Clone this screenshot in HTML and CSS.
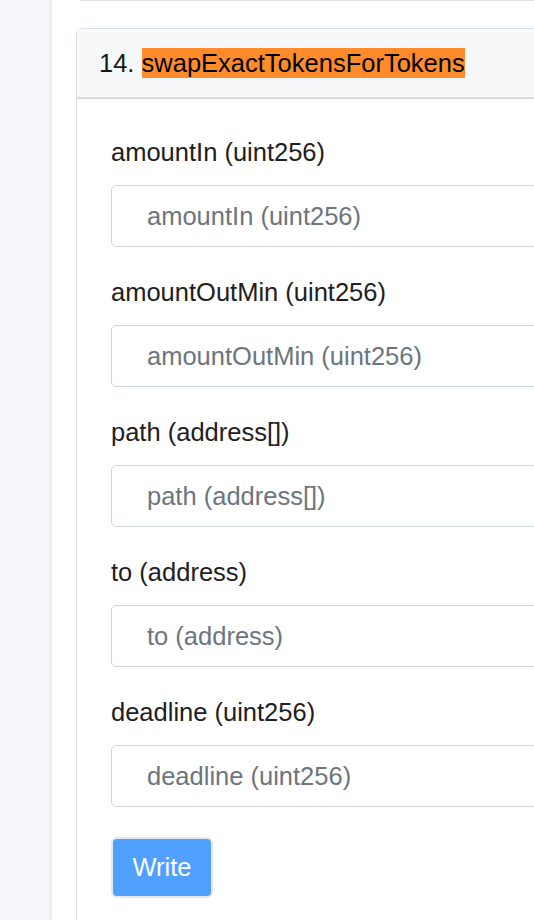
FILE: index.html
```html
<!DOCTYPE html>
<html>
<head>
<meta charset="utf-8">
<link rel="stylesheet" href="styles.css">
</head>
<body>
<div class="layout">
  <aside class="sidebar"></aside>
  <main class="main">
    <div class="prev-card"></div>
    <section class="card">
      <div class="card-header">14. <mark class="hl">swapExactTokensForTokens</mark></div>
      <form class="card-body">
        <div class="field">
          <label class="label">amountIn (uint256)</label>
          <input class="input" type="text" placeholder="amountIn (uint256)">
        </div>
        <div class="field">
          <label class="label">amountOutMin (uint256)</label>
          <input class="input" type="text" placeholder="amountOutMin (uint256)">
        </div>
        <div class="field">
          <label class="label">path (address[])</label>
          <input class="input" type="text" placeholder="path (address[])">
        </div>
        <div class="field">
          <label class="label">to (address)</label>
          <input class="input" type="text" placeholder="to (address)">
        </div>
        <div class="field">
          <label class="label">deadline (uint256)</label>
          <input class="input" type="text" placeholder="deadline (uint256)">
        </div>
        <button class="btn" type="button">Write</button>
      </form>
    </section>
  </main>
</div>
</body>
</html>
```
FILE: styles.css
```css
html, body {
  margin: 0;
  padding: 0;
  background: #ffffff;
  overflow: hidden;
  width: 534px;
  height: 920px;
}
body {
  font-family: "Liberation Sans", Arial, Helvetica, sans-serif;
  color: #1e2022;
}
.layout {
  display: flex;
  height: 920px;
  overflow: hidden;
}
.sidebar {
  flex: 0 0 50px;
  background: #f5f6f9;
  border-right: 2px solid #eaedf2;
}
.main {
  flex: 0 0 640px;
  padding-left: 24px;
}
.prev-card {
  height: 0;
  margin-left: 4px;
  border-bottom: 1px solid #dcdfe3;
}
.card {
  margin-top: 27px;
  border: 1px solid #dcdfe3;
  border-radius: 6px;
  background: #fff;
  height: 1000px;
}
.card-header {
  background: #f7f8fa;
  border-bottom: 2px solid #d9dadc;
  border-radius: 6px 6px 0 0;
  height: 68px;
  padding-left: 22px;
  font-size: 25.5px;
  line-height: 68px;
  color: #16181a;
}
.hl {
  background: #ff8b2b;
  color: #000;
  padding: 0;
  line-height: 30px;
  display: inline-block;
}
.card-body {
  padding: 36px 0 0 34px;
  display: flex;
  flex-direction: column;
  align-items: flex-start;
}
.field {
  display: flex;
  flex-direction: column;
  width: 560px;
  margin-bottom: 28px;
}
.label {
  font-size: 25.5px;
  line-height: 34px;
  color: #1e2022;
  margin-bottom: 16px;
}
.input {
  box-sizing: border-box;
  height: 62px;
  border: 1px solid #ced4da;
  border-radius: 5px;
  padding: 0 0 0 35px;
  font-family: "Liberation Sans", Arial, sans-serif;
  font-size: 25.5px;
  color: #495057;
  background: #fff;
  outline: none;
}
.input::placeholder {
  color: #6c757d;
  opacity: 1;
}
.btn {
  box-sizing: border-box;
  width: 102px;
  height: 61px;
  margin-top: 2px;
  background: #4fa0ff;
  border: 2px solid #e3e8ef;
  border-radius: 6px;
  color: #fff;
  font-family: "Liberation Sans", Arial, sans-serif;
  font-size: 25.5px;
  padding: 0;
  cursor: pointer;
}
```
